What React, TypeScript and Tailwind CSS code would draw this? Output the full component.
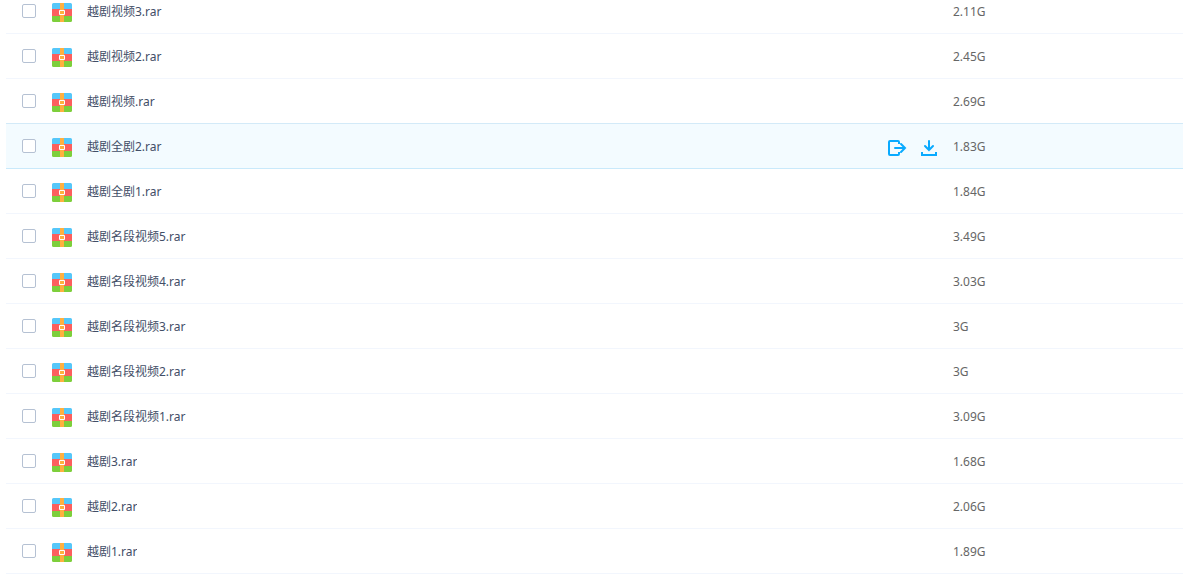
import { useState } from "react"
import clsx from "clsx"

type FileItem = {
    name: string
    size: string
}

const FILES: FileItem[] = [
    { name: "越剧视频3.rar", size: "2.11G" },
    { name: "越剧视频2.rar", size: "2.45G" },
    { name: "越剧视频.rar", size: "2.69G" },
    { name: "越剧全剧2.rar", size: "1.83G" },
    { name: "越剧全剧1.rar", size: "1.84G" },
    { name: "越剧名段视频5.rar", size: "3.49G" },
    { name: "越剧名段视频4.rar", size: "3.03G" },
    { name: "越剧名段视频3.rar", size: "3G" },
    { name: "越剧名段视频2.rar", size: "3G" },
    { name: "越剧名段视频1.rar", size: "3.09G" },
    { name: "越剧3.rar", size: "1.68G" },
    { name: "越剧2.rar", size: "2.06G" },
    { name: "越剧1.rar", size: "1.89G" },
]

const RarIcon = () => (
    <svg className="h-[22px] w-5 shrink-0" viewBox="0 0 20 22" aria-hidden="true">
        <path d="M0 9V4.5A1.5 1.5 0 0 1 1.5 3h17A1.5 1.5 0 0 1 20 4.5V9z" fill="#55c7f9" />
        <path d="M0 9h20v7H0z" fill="#fc5f5e" />
        <path d="M0 16h20v4.5a1.5 1.5 0 0 1-1.5 1.5h-17A1.5 1.5 0 0 1 0 20.5z" fill="#7dcf3b" />
        <path d="M8 3h4v19H8z" fill="#ffb03f" />
        <path d="M7.5 10.5h5v4h-5z" fill="#ffb03f" stroke="#fff" />
    </svg>
)

const ShareIcon = () => (
    <svg className="size-5" viewBox="0 0 20 20" fill="none" stroke="#09aaff" strokeWidth="2" aria-hidden="true">
        <path d="M12 6V4q0-1-1-1H3q-1 0-1 1v12q0 1 1 1h8q1 0 1-1v-2" />
        <path d="M8 10h10M14 6l4 4-4 4" strokeLinecap="round" />
    </svg>
)

const DownloadIcon = () => (
    <svg className="size-5" viewBox="0 0 20 20" fill="none" stroke="#09aaff" strokeWidth="2" aria-hidden="true">
        <path d="M10 3v9M6 8l4 4 4-4" strokeLinecap="round" />
        <path d="M3 14v3h14v-3" />
    </svg>
)

const FileList = ({ files }: { files: FileItem[] }) => {

    const [active, setActive] = useState(3)

    return (
        <table className="w-full table-fixed border-separate border-spacing-0 text-left text-xs">
            <colgroup>
                <col />
                <col className="w-[66px]" />
                <col className="w-[230px]" />
            </colgroup>
            <tbody>
                {files.map((file, i) => {
                    const border = clsx(
                        "h-[45px] border-b",
                        i === active ? "border-[#c9e9fb]" : i === active - 1 ? "border-[#d3eaf8]" : "border-[#f2f6fd]"
                    )

                    return (
                        <tr
                            key={file.name}
                            onMouseEnter={() => setActive(i)}
                            className={clsx(i === active && "bg-[#f3fbff]")}
                        >
                            {/* NAME */}
                            <td className={clsx(border, "p-0")}>
                                <label className="flex items-center pl-4 text-[#424e67]">
                                    <input
                                        type="checkbox"
                                        className="mr-4 size-3.5 shrink-0 appearance-none rounded-xs border border-[#b5c1d3] bg-white checked:bg-[#09aaff]"
                                    />
                                    <RarIcon />
                                    <span className="ml-[15px] truncate pt-0.5">{file.name}</span>
                                </label>
                            </td>

                            {/* ACTIONS */}
                            <td className={clsx(border, "p-0")}>
                                {i === active && (
                                    <div className="flex gap-3 pt-1">
                                        <button type="button" aria-label="分享">
                                            <ShareIcon />
                                        </button>
                                        <button type="button" aria-label="下载">
                                            <DownloadIcon />
                                        </button>
                                    </div>
                                )}
                            </td>

                            {/* SIZE */}
                            <td className={clsx(border, "px-0 pt-0.5 pb-0 text-[#666]")}>{file.size}</td>
                        </tr>
                    )
                })}
            </tbody>
        </table>
    )
}

export default function App() {
    return (
        <main className="overflow-hidden bg-white pl-1.5 font-['Noto_Sans','Noto_Sans_CJK_SC',sans-serif]">
            {/* the list is scrolled a little past the top of its first row */}
            <div className="-mt-[11px]">
                <FileList files={FILES} />
            </div>
        </main>
    )
}
